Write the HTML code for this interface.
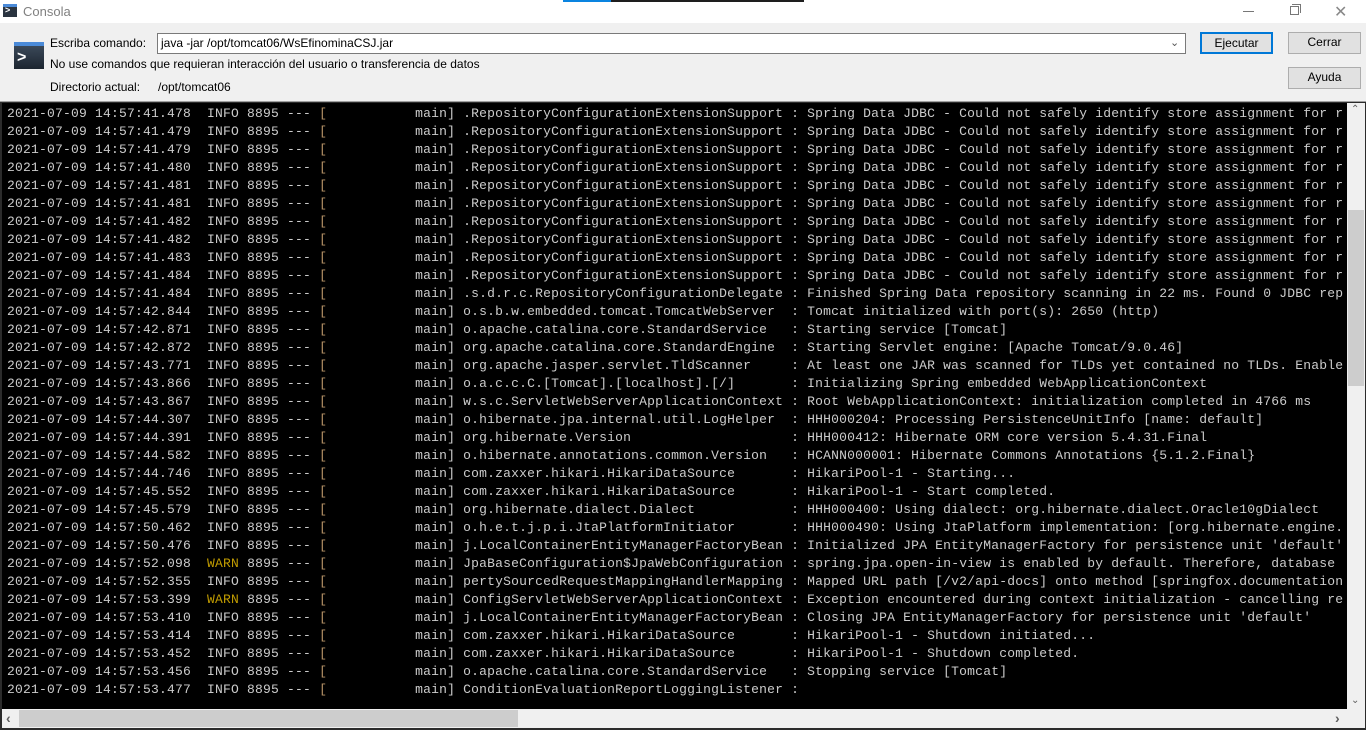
<!DOCTYPE html>
<html><head><meta charset="utf-8"><style>
*{margin:0;padding:0;box-sizing:border-box}
body{width:1366px;height:730px;overflow:hidden;background:#f0f0f0;font-family:"Liberation Sans",sans-serif;font-size:12px;color:#000;position:relative}
.abs{position:absolute}
#title{left:0;top:0;width:1366px;height:23px;background:#fff}
.btn{position:absolute;background:#e1e1e1;border:1px solid #adadad;text-align:center;line-height:19px;font-size:12px}
#con{left:0;top:101px;width:1366px;height:629px;background:#2b2b2b;border-top:1px solid #a0a0a0}
#blk{left:2px;top:103px;width:1345px;height:606px;background:#000;overflow:hidden}
pre{font-family:"Liberation Mono",monospace;font-size:13px;letter-spacing:0.2px;line-height:18px;color:#cccccc;white-space:pre;padding:2px 0 0 5px}
pre b{font-weight:normal;display:inline-block;width:calc(40ch + 8px)}
.w{color:#c19c00}
.k{color:#b89468}
</style></head><body>
<div id="title" class="abs"></div>
<div class="abs" style="left:563px;top:0;width:48px;height:2px;background:#0a84e0"></div>
<div class="abs" style="left:611px;top:0;width:193px;height:2px;background:#1e1e1e"></div>
<div class="abs" style="left:3px;top:4px;width:14px;height:13px;background:#2a3440;border-top:3px solid #4a8ad8"></div>
<div class="abs" style="left:5px;top:5px;color:#fff;font-size:9px;font-weight:bold">&gt;</div>
<div class="abs" style="left:23px;top:4px;color:#808080;font-size:13px">Consola</div>
<div class="abs" style="left:1243px;top:11px;width:11px;height:1px;background:#777"></div>
<div class="abs" style="left:1290px;top:6px;width:9px;height:9px;border:1px solid #777"></div>
<div class="abs" style="left:1292px;top:4px;width:9px;height:9px;border-top:1px solid #777;border-right:1px solid #777"></div>
<div class="abs" style="left:1334px;top:2px;color:#888;font-size:16px">✕</div>

<div class="abs" style="left:14px;top:42px;width:30px;height:27px;background:linear-gradient(#3a4858,#1c2530);border-top:4px solid #4a8ad8"></div>
<div class="abs" style="left:17px;top:49px;color:#fff;font-size:16px;font-weight:bold">&gt;</div>
<div class="abs" style="left:50px;top:36px">Escriba comando:</div>
<div class="abs" style="left:157px;top:33px;width:1029px;height:21px;background:#fff;border:1px solid #7a7a7a;padding:2px 3px">java -jar /opt/tomcat06/WsEfinominaCSJ.jar</div>
<div class="abs" style="left:1170px;top:36px;color:#555;font-size:11px">&#8964;</div>
<div class="btn" style="left:1200px;top:32px;width:73px;height:22px;border:2px solid #0078d7;line-height:18px">Ejecutar</div>
<div class="btn" style="left:1288px;top:32px;width:73px;height:22px">Cerrar</div>
<div class="btn" style="left:1288px;top:67px;width:73px;height:22px">Ayuda</div>
<div class="abs" style="left:50px;top:57px">No use comandos que requieran interacción del usuario o transferencia de datos</div>
<div class="abs" style="left:50px;top:80px">Directorio actual:</div>
<div class="abs" style="left:158px;top:80px">/opt/tomcat06</div>

<div id="con" class="abs"></div>
<div id="blk" class="abs"><pre>2021-07-09 14:57:41.478  INFO 8895 --- <span class="k">[</span>           main] <b>.RepositoryConfigurationExtensionSupport</b> : Spring Data JDBC - Could not safely identify store assignment for r
2021-07-09 14:57:41.479  INFO 8895 --- <span class="k">[</span>           main] <b>.RepositoryConfigurationExtensionSupport</b> : Spring Data JDBC - Could not safely identify store assignment for r
2021-07-09 14:57:41.479  INFO 8895 --- <span class="k">[</span>           main] <b>.RepositoryConfigurationExtensionSupport</b> : Spring Data JDBC - Could not safely identify store assignment for r
2021-07-09 14:57:41.480  INFO 8895 --- <span class="k">[</span>           main] <b>.RepositoryConfigurationExtensionSupport</b> : Spring Data JDBC - Could not safely identify store assignment for r
2021-07-09 14:57:41.481  INFO 8895 --- <span class="k">[</span>           main] <b>.RepositoryConfigurationExtensionSupport</b> : Spring Data JDBC - Could not safely identify store assignment for r
2021-07-09 14:57:41.481  INFO 8895 --- <span class="k">[</span>           main] <b>.RepositoryConfigurationExtensionSupport</b> : Spring Data JDBC - Could not safely identify store assignment for r
2021-07-09 14:57:41.482  INFO 8895 --- <span class="k">[</span>           main] <b>.RepositoryConfigurationExtensionSupport</b> : Spring Data JDBC - Could not safely identify store assignment for r
2021-07-09 14:57:41.482  INFO 8895 --- <span class="k">[</span>           main] <b>.RepositoryConfigurationExtensionSupport</b> : Spring Data JDBC - Could not safely identify store assignment for r
2021-07-09 14:57:41.483  INFO 8895 --- <span class="k">[</span>           main] <b>.RepositoryConfigurationExtensionSupport</b> : Spring Data JDBC - Could not safely identify store assignment for r
2021-07-09 14:57:41.484  INFO 8895 --- <span class="k">[</span>           main] <b>.RepositoryConfigurationExtensionSupport</b> : Spring Data JDBC - Could not safely identify store assignment for r
2021-07-09 14:57:41.484  INFO 8895 --- <span class="k">[</span>           main] <b>.s.d.r.c.RepositoryConfigurationDelegate</b> : Finished Spring Data repository scanning in 22 ms. Found 0 JDBC rep
2021-07-09 14:57:42.844  INFO 8895 --- <span class="k">[</span>           main] <b>o.s.b.w.embedded.tomcat.TomcatWebServer</b> : Tomcat initialized with port(s): 2650 (http)
2021-07-09 14:57:42.871  INFO 8895 --- <span class="k">[</span>           main] <b>o.apache.catalina.core.StandardService</b> : Starting service [Tomcat]
2021-07-09 14:57:42.872  INFO 8895 --- <span class="k">[</span>           main] <b>org.apache.catalina.core.StandardEngine</b> : Starting Servlet engine: [Apache Tomcat/9.0.46]
2021-07-09 14:57:43.771  INFO 8895 --- <span class="k">[</span>           main] <b>org.apache.jasper.servlet.TldScanner</b> : At least one JAR was scanned for TLDs yet contained no TLDs. Enable
2021-07-09 14:57:43.866  INFO 8895 --- <span class="k">[</span>           main] <b>o.a.c.c.C.[Tomcat].[localhost].[/]</b> : Initializing Spring embedded WebApplicationContext
2021-07-09 14:57:43.867  INFO 8895 --- <span class="k">[</span>           main] <b>w.s.c.ServletWebServerApplicationContext</b> : Root WebApplicationContext: initialization completed in 4766 ms
2021-07-09 14:57:44.307  INFO 8895 --- <span class="k">[</span>           main] <b>o.hibernate.jpa.internal.util.LogHelper</b> : HHH000204: Processing PersistenceUnitInfo [name: default]
2021-07-09 14:57:44.391  INFO 8895 --- <span class="k">[</span>           main] <b>org.hibernate.Version</b> : HHH000412: Hibernate ORM core version 5.4.31.Final
2021-07-09 14:57:44.582  INFO 8895 --- <span class="k">[</span>           main] <b>o.hibernate.annotations.common.Version</b> : HCANN000001: Hibernate Commons Annotations {5.1.2.Final}
2021-07-09 14:57:44.746  INFO 8895 --- <span class="k">[</span>           main] <b>com.zaxxer.hikari.HikariDataSource</b> : HikariPool-1 - Starting...
2021-07-09 14:57:45.552  INFO 8895 --- <span class="k">[</span>           main] <b>com.zaxxer.hikari.HikariDataSource</b> : HikariPool-1 - Start completed.
2021-07-09 14:57:45.579  INFO 8895 --- <span class="k">[</span>           main] <b>org.hibernate.dialect.Dialect</b> : HHH000400: Using dialect: org.hibernate.dialect.Oracle10gDialect
2021-07-09 14:57:50.462  INFO 8895 --- <span class="k">[</span>           main] <b>o.h.e.t.j.p.i.JtaPlatformInitiator</b> : HHH000490: Using JtaPlatform implementation: [org.hibernate.engine.
2021-07-09 14:57:50.476  INFO 8895 --- <span class="k">[</span>           main] <b>j.LocalContainerEntityManagerFactoryBean</b> : Initialized JPA EntityManagerFactory for persistence unit 'default'
2021-07-09 14:57:52.098  <span class="w">WARN</span> 8895 --- <span class="k">[</span>           main] <b>JpaBaseConfiguration$JpaWebConfiguration</b> : spring.jpa.open-in-view is enabled by default. Therefore, database
2021-07-09 14:57:52.355  INFO 8895 --- <span class="k">[</span>           main] <b>pertySourcedRequestMappingHandlerMapping</b> : Mapped URL path [/v2/api-docs] onto method [springfox.documentation
2021-07-09 14:57:53.399  <span class="w">WARN</span> 8895 --- <span class="k">[</span>           main] <b>ConfigServletWebServerApplicationContext</b> : Exception encountered during context initialization - cancelling re
2021-07-09 14:57:53.410  INFO 8895 --- <span class="k">[</span>           main] <b>j.LocalContainerEntityManagerFactoryBean</b> : Closing JPA EntityManagerFactory for persistence unit 'default'
2021-07-09 14:57:53.414  INFO 8895 --- <span class="k">[</span>           main] <b>com.zaxxer.hikari.HikariDataSource</b> : HikariPool-1 - Shutdown initiated...
2021-07-09 14:57:53.452  INFO 8895 --- <span class="k">[</span>           main] <b>com.zaxxer.hikari.HikariDataSource</b> : HikariPool-1 - Shutdown completed.
2021-07-09 14:57:53.456  INFO 8895 --- <span class="k">[</span>           main] <b>o.apache.catalina.core.StandardService</b> : Stopping service [Tomcat]
2021-07-09 14:57:53.477  INFO 8895 --- <span class="k">[</span>           main] <b>ConditionEvaluationReportLoggingListener</b> : </pre></div>

<div class="abs" style="left:1347px;top:103px;width:18px;height:606px;background:#f0f0f0"></div>
<div class="abs" style="left:1348px;top:210px;width:16px;height:176px;background:#cdcdcd"></div>
<div class="abs" style="left:1351px;top:104px;color:#606060;font-size:10px">&#8963;</div>
<div class="abs" style="left:1351px;top:695px;color:#606060;font-size:10px">&#8964;</div>
<div class="abs" style="left:2px;top:709px;width:1345px;height:19px;background:#f0f0f0"></div>
<div class="abs" style="left:19px;top:710px;width:499px;height:17px;background:#cdcdcd"></div>
<div class="abs" style="left:6px;top:710px;color:#606060;font-size:14px;font-weight:bold">‹</div>
<div class="abs" style="left:1335px;top:710px;color:#606060;font-size:14px;font-weight:bold">›</div>
<div class="abs" style="left:1347px;top:709px;width:18px;height:19px;background:#f0f0f0"></div>
</body></html>
